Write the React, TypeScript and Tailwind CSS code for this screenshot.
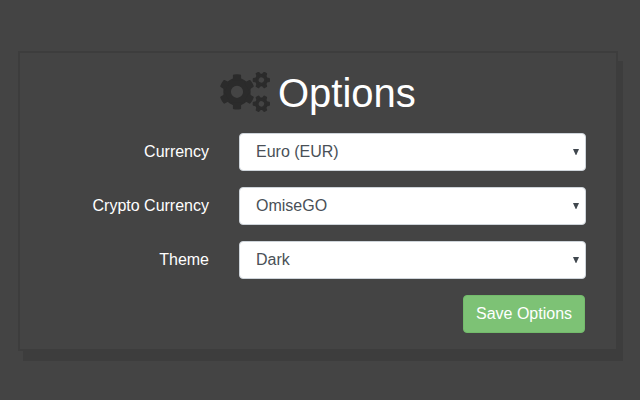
const TEETH = [0, 60, 120, 180, 240, 300];

const fields = [
  { label: "Currency", value: "Euro (EUR)" },
  { label: "Crypto Currency", value: "OmiseGO" },
  { label: "Theme", value: "Dark" },
];

function SmallGear({ x, y }: { x: number; y: number }) {
  return (
    <g transform={`translate(${x} ${y}) rotate(30)`}>
      <circle r="4.5" fill="none" stroke="currentColor" strokeWidth="3.6" />
      {TEETH.map((angle) => (
        <path
          key={angle}
          transform={`rotate(${angle})`}
          d="M-2.6-5 L-2-8 Q-1.8-8.7-1-8.7 H1 Q1.8-8.7 2-8 L2.6-5Z"
        />
      ))}
    </g>
  );
}

function CogsIcon() {
  return (
    <svg
      width="50"
      height="40"
      viewBox="0 0 50 40"
      fill="currentColor"
      className="mb-0.5 mr-2 shrink-0 text-[#2b2b2b]"
    >
      <g transform="translate(17 19.8)">
        <circle r="9.9" fill="none" stroke="currentColor" strokeWidth="7.6" />
        {TEETH.map((angle) => (
          <path
            key={angle}
            transform={`rotate(${angle})`}
            d="M-5.4-11 L-4.1-13.4 V-16.5 Q-4-17.3-3.2-17.4 Q0-17.9 3.2-17.4 Q4-17.3 4.1-16.5 V-13.4 L5.4-11Z"
          />
        ))}
      </g>
      <SmallGear x={41.4} y={8} />
      <SmallGear x={41.4} y={31.8} />
    </svg>
  );
}

function SelectField({ label, value }: { label: string; value: string }) {
  return (
    <div className="mb-4 flex h-[38px] items-center">
      <label className="mr-[30px] w-[159px] text-right text-white">{label}</label>
      <button
        type="button"
        className="flex h-[38px] w-[347px] items-center justify-between rounded border border-[#ced4da] bg-white pl-4 pr-[6px] text-left text-[#495057]"
      >
        <span>{value}</span>
        <svg width="6" height="6" viewBox="0 0 6 6" fill="#40474e">
          <path d="M0 0h6L3.3 6h-.6z" />
        </svg>
      </button>
    </div>
  );
}

export default function App() {
  return (
    <div className="h-[400px] w-[640px] overflow-hidden bg-[#444444] pl-[18px] pt-[51px] font-['Liberation_Sans',Arial,sans-serif] text-base leading-6">
      <main className="h-[300px] w-[600px] border-2 border-[#3d3d3d] bg-[#444444] pl-[30px] pt-4 shadow-[5px_10px_0_#3d3d3d]">
        <h1 className="mb-2 flex h-12 items-center pl-[170px] text-[40px] leading-[48px] text-white">
          <CogsIcon />
          <span>Options</span>
        </h1>
        <form className="pt-2">
          {fields.map((field) => (
            <SelectField key={field.label} {...field} />
          ))}
          <div className="flex w-[535px] justify-end">
            <button
              type="button"
              className="h-[38px] w-[122px] whitespace-nowrap rounded border border-[#73bb6b] bg-[#7dc275] text-white"
            >
              Save Options
            </button>
          </div>
        </form>
      </main>
    </div>
  );
}
